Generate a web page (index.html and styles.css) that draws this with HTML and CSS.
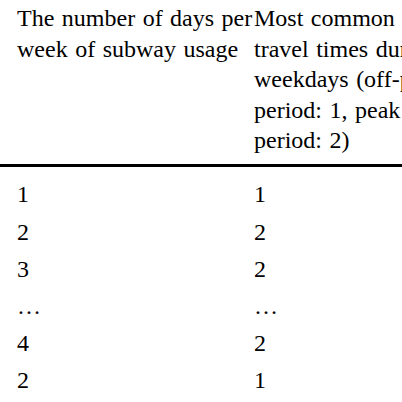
FILE: index.html
```html
<!DOCTYPE html>
<html lang="en">
<head>
<meta charset="utf-8">
<title>Subway usage table</title>
<link rel="stylesheet" href="styles.css">
</head>
<body>
<div class="usage-grid">
  <div class="ug-line ug-header">
    <div class="ug-first">The number of days per week of subway usage</div>
    <div class="ug-second">Most common travel times during weekdays (off-peak period: 1, peak period: 2)</div>
  </div>
  <div class="ug-rows">
    <div class="ug-line"><div class="ug-first">1</div><div class="ug-second">1</div></div>
    <div class="ug-line"><div class="ug-first">2</div><div class="ug-second">2</div></div>
    <div class="ug-line"><div class="ug-first">3</div><div class="ug-second">2</div></div>
    <div class="ug-line"><div class="ug-first">…</div><div class="ug-second">…</div></div>
    <div class="ug-line"><div class="ug-first">4</div><div class="ug-second">2</div></div>
    <div class="ug-line"><div class="ug-first">2</div><div class="ug-second">1</div></div>
  </div>
</div>
</body>
</html>
```
FILE: styles.css
```css
body {
  margin: 0;
  font-size: 24px;
}
.usage-grid {
  width: 402px;
  height: 402px;
  overflow: hidden;
  background: #fff;
  color: #000;
}
.ug-line {
  display: flex;
  width: 600px;
}
.ug-first {
  flex: none;
  width: 237px;
  padding-left: 17px;
  font-family: "Liberation Serif";
  font-size: 24px;
  word-spacing: 1.5px;
}
.ug-second {
  flex: none;
  width: 197px;
  padding-right: 6px;
  font-family: "Liberation Serif";
  font-size: 24px;
  word-spacing: 1.5px;
}
.ug-header {
  line-height: 30.5px;
  padding-top: 3px;
  padding-bottom: 8.5px;
  border-bottom: 3px solid #000;
}
.ug-rows {
  padding-top: 9.3px;
  line-height: 37.2px;
}
```
